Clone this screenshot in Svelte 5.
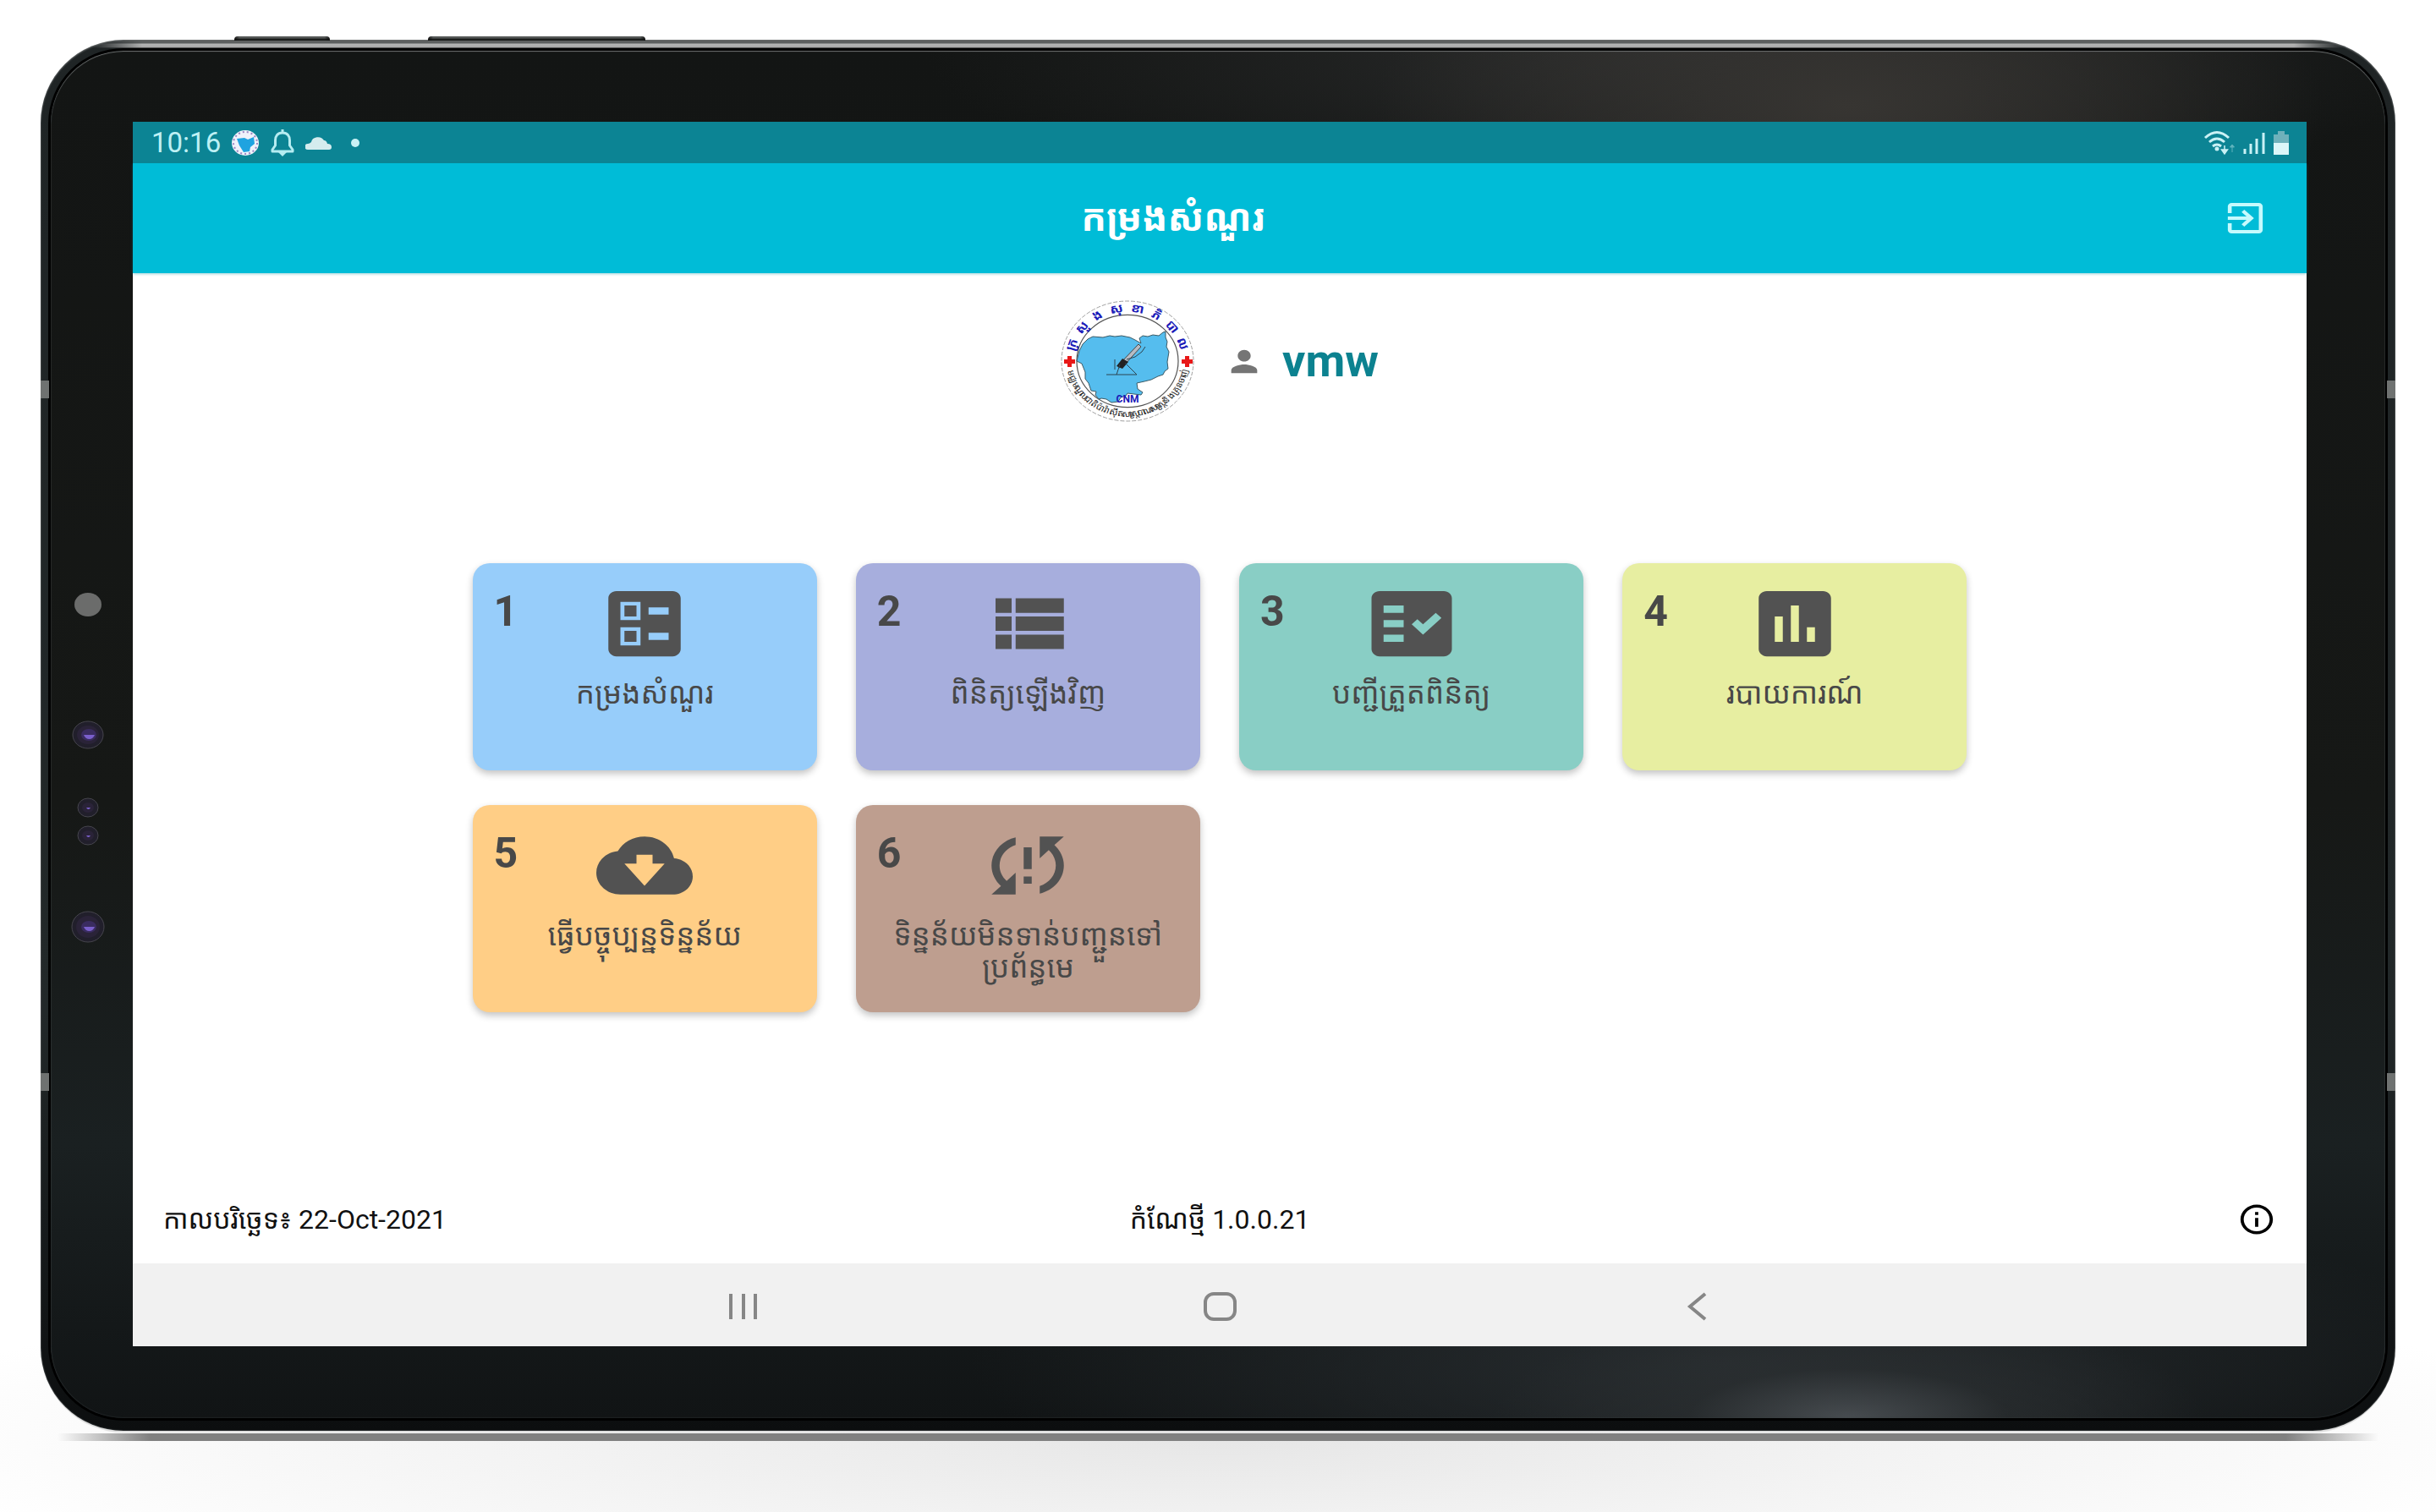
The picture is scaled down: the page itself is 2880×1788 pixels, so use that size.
<script>
  const cards = [
    { n: 1, tone: 'blue', label: 'កម្រងសំណួរ', icon: 'ballot' },
    { n: 2, tone: 'indigo', label: 'ពិនិត្យឡើងវិញ', icon: 'list' },
    { n: 3, tone: 'teal', label: 'បញ្ជីត្រួតពិនិត្យ', icon: 'check' },
    { n: 4, tone: 'lime', label: 'របាយការណ៍', icon: 'chart' },
    { n: 5, tone: 'orange', label: 'ធ្វើបច្ចុប្បន្នទិន្នន័យ', icon: 'cloud' },
    { n: 6, tone: 'brown', label: 'ទិន្នន័យមិនទាន់បញ្ជួនទៅ ប្រព័ន្ធមេ', icon: 'sync' }
  ];

  const icons = {
    ballot: 'M13 9.500h5v-2h-5v2zm0 7h5v-2h-5v2zm6 4.500H5c-1.100 0-2-.9-2-2V5c0-1.100.9-2 2-2h14c1.100 0 2 .9 2 2v14c0 1.100-.9 2-2 2zM6 11h5V6H6v5zm1-4h3v3H7V7zM6 18h5v-5H6v5zm1-4h3v3H7v-3z',
    list: 'M4 14h4v-4H4v4zm0 5h4v-4H4v4zm0-10h4V5H4v4zm5 5h12v-4H9v4zm0 5h12v-4H9v4zM9 5v4h12V5H9z',
    check: 'M20 3H4c-1.100 0-2 .9-2 2v14c0 1.100.9 2 2 2h16c1.100 0 2-.9 2-2V5c0-1.100-.9-2-2-2zM10 17H5v-2h5v2zm0-4H5v-2h5v2zm0-4H5V7h5v2zm4.820 6L12 12.160l1.410-1.410 1.410 1.420L17.990 9l1.420 1.420L14.820 15z',
    chart: 'M19 3H5c-1.100 0-2 .9-2 2v14c0 1.100.9 2 2 2h14c1.100 0 2-.9 2-2V5c0-1.100-.9-2-2-2zM9 17H7v-7h2v7zm4 0h-2V7h2v10zm4 0h-2v-4h2v4z',
    cloud: 'M19.350 10.040C18.670 6.590 15.640 4 12 4 9.110 4 6.600 5.640 5.350 8.040 2.340 8.360 0 10.910 0 14c0 3.310 2.690 6 6 6h13c2.760 0 5-2.240 5-5 0-2.640-2.050-4.780-4.650-4.960zM12 17.600l-5-6.100h3V9h4v2.500h3z',
    sync: 'M3 12c0 2.210.91 4.200 2.360 5.640L3 20h6v-6l-2.240 2.240C5.680 15.150 5 13.660 5 12c0-2.610 1.670-4.830 4-5.650V4.260C5.550 5.150 3 8.270 3 12zm8 5h2v-2h-2v2zM21 4h-6v6l2.240-2.240C18.320 8.850 19 10.340 19 12c0 2.610-1.670 4.830-4 5.650v2.090c3.450-.89 6-4.010 6-7.740 0-2.210-.91-4.200-2.360-5.640L21 4zm-10 9h2V7h-2v6z'
  };

  const upperRing = [
    ['ក្រ', -72], ['សួ', -51], ['ង', -31], ['សុ', -11],
    ['ខា', 10], ['ភិ', 30], ['បា', 50], ['ល', 71]
  ];
  const lowerRing = ['ម', 'ជ្ឈ', 'ម', 'ណ្ឌ', 'ល', 'ជា', 'តិ', 'ប៉ា', 'រ៉ា', 'ស៊ី', 'ត', 'សា', 'ស្ត្រ', 'បា', 'ណ', 'សា', 'ស្ត្រ', 'និ', 'ង', 'គ្រុ', 'ន', 'ចា', 'ញ់'];
  const lowerAngle = (i) => 77 - i * 7;
</script>

<div class="stage">
  <div class="device">
    <span class="key power"></span>
    <span class="key volume"></span>
    <span class="band upper left"></span>
    <span class="band lower left"></span>
    <span class="band upper right"></span>
    <span class="band lower right"></span>
    <div class="glass">
      <svg class="sensors" viewBox="0 0 48 430" aria-hidden="true">
        <ellipse cx="24" cy="20" rx="16" ry="14" fill="#6b6c6b" />
        {#each [[174, 18, 16, 1], [260, 12, 11, 0], [293, 12, 11, 0], [401, 19, 18, 1]] as [cy, rx, ry, big]}
          <ellipse cx="24" {cy} {rx} {ry} fill="#211f2b" stroke="#46454d" stroke-width="1" />
          <ellipse cx="24" {cy} rx={rx - 5} ry={ry - 5} fill="#2a2338" />
          {#if big}
            <ellipse cx="25" {cy} rx="9" ry="7" fill="#3a2c60" />
            <path d="M19 {cy}h13q-2 5-6.500 5t-6.500-5z" fill="#7a5fcb" />
          {:else}
            <path d="M22 {cy}h5q-1 2-2.500 2t-2.500-2z" fill="#7a5fcb" />
          {/if}
        {/each}
      </svg>

      <div class="screen">
        <div class="status">
          <div class="group">
            <span class="time">10:16</span>
            <svg width="34" height="32" viewBox="0 0 34 32" aria-hidden="true">
              <ellipse cx="17" cy="16" rx="16" ry="15" fill="#eef2fa" />
              <ellipse cx="17" cy="16" rx="14" ry="13" fill="none" stroke="#9d86c4" stroke-width="2" stroke-dasharray="2 3" />
              <path d="M7 11l9-1 4 2 7-3 1 8-5 4-1 5-7 1-5-8z" fill="#1fa3e0" />
            </svg>
            <svg width="30" height="32" viewBox="0 0 30 32" fill="none" stroke="#b5ecf1" stroke-width="3" aria-hidden="true">
              <path d="M15 0v4M15 4c-6 0-8.500 4-8.500 9v6L3 24v2h24v-2l-3.500-5v-6c0-5-2.500-9-8.500-9z" stroke-linejoin="round" />
              <path d="M10 27h10l-5 5z" fill="#b5ecf1" stroke="none" />
            </svg>
            <svg width="32" height="18" viewBox="0 0 32 18" aria-hidden="true">
              <path d="M3 17a3 3 0 0 1 0-7q2 0 4-2a8 7 0 0 1 15-2q3 0 4 4 5 0 5 4 0 3-3 3z" fill="#d5ecee" />
            </svg>
            <span class="dot"></span>
          </div>
          <div class="group tight">
            <svg width="38" height="30" viewBox="0 0 38 30" fill="none" stroke="#c9f1f5" stroke-width="3" aria-hidden="true">
              <path d="M2 9q14-13 28 0M7 14q9-8 18 0M11 19q5-4 10 0" />
              <circle cx="16" cy="22" r="2.500" fill="#c9f1f5" stroke="none" />
              <path d="M25 18v6M21.500 23h7l-3.500 5z" fill="#c9f1f5" stroke-width="1.500" />
              <path d="M34 26v-7M31.500 20h5L34 17z" stroke="#5fb3bd" fill="#5fb3bd" stroke-width="1" />
            </svg>
            <svg width="26" height="26" viewBox="0 0 26 26" fill="none" stroke="#c9f1f5" stroke-width="3" aria-hidden="true">
              <path d="M2 26v-6M9 26V14M16 26V8M24 26V1" />
            </svg>
            <svg width="20" height="28" viewBox="0 0 20 28" aria-hidden="true">
              <path d="M6 0h8v4h5v11H1V4h5z" fill="#6eb1bb" />
              <path d="M1 14h18v14H1z" fill="#dcf6f8" />
            </svg>
          </div>
        </div>

        <header>
          <h1>កម្រងសំណួរ</h1>
          <button class="plain" aria-label="Log out">
            <svg width="55" height="48" viewBox="0 0 24 24" preserveAspectRatio="none" fill="#c6fafd" aria-hidden="true">
              <path d="M10.090 15.590L11.500 17l5-5-5-5-1.410 1.410L12.670 11H3v2h9.670l-2.580 2.590zM19 3H5c-1.110 0-2 .9-2 2v4h2V5h14v14H5v-4H3v4c0 1.100.89 2 2 2h14c1.100 0 2-.9 2-2V5c0-1.100-.9-2-2-2z" />
            </svg>
          </button>
        </header>

        <main>
          <div class="profile">
            <svg class="logo" viewBox="0 0 158 144" role="img" aria-label="CNM">
              <g transform="translate(79 72) scale(1 .91)">
                <circle r="78" fill="#fff" stroke="#999" stroke-dasharray="5 2" />
                <circle r="60" fill="#fff" stroke="#555" stroke-width="1.200" />
                {#each upperRing as [glyph, angle]}
                  <text class="ring" transform="rotate({angle}) translate(0 -64)" text-anchor="middle">{glyph}</text>
                {/each}
                {#each lowerRing as glyph, i}
                  <text class="lower-ring" transform="rotate({lowerAngle(i)}) translate(0 72)" text-anchor="middle">{glyph}</text>
                {/each}
              </g>
              <path d="M22 60l4-8 6-6 6-3 12 1 8-2 6 1 8-1 10 2 6 3 7 4-2-6 4-3 6 1 6-2 7 1 5-4 3-1 0 7 2 5-1 6 3 6-2 12 1 8-4 3-2 4-6 2-8 4-8 2-9 2 1 7 6 4-2 3-8-1-8-1-2 3-6 2-3 5-8 1-6-4-6-1-3 1-4-5 1-4-6-1-3-9-4-5 0-8-4-10-6-3z" fill="#55bdee" stroke="#3b5a66" stroke-width="1" />
              <path d="M92 52l3 3-20 22-6 3 1-5z" fill="#b8bcc4" stroke="#444" />
              <path d="M66 78l7-9 7 4-7 8z" fill="#222" />
              <path d="M54 88h36M70 76l-4 12M76 74l14 14M64 70v12M78 70l10-3 8-6 4-6" fill="none" stroke="#2d4450" />
              <path d="M4 70h4v-4h5v4h4v5h-4v4h-5v-4h-4zM143 70h4v-4h5v4h4v5h-4v4h-5v-4h-4z" fill="#e81818" />
              <text x="79" y="121" class="cnm" text-anchor="middle">CNM</text>
            </svg>
            <div class="user">
              <svg width="46" height="41" viewBox="0 0 24 24" preserveAspectRatio="none" fill="#757575" aria-hidden="true">
                <path d="M12 12c2.210 0 4-1.790 4-4s-1.790-4-4-4-4 1.790-4 4 1.790 4 4 4zm0 2c-2.670 0-8 1.340-8 4v2h16v-2c0-2.660-5.330-4-8-4z" />
              </svg>
              <strong>vmw</strong>
            </div>
          </div>

          <nav class="grid" aria-label="Menu">
            {#each cards as card}
              <button class="card {card.tone}">
                <span class="number">{card.n}</span>
                <svg width="114" height="103" viewBox="0 0 24 24" preserveAspectRatio="none" fill="#525252" fill-rule="evenodd" aria-hidden="true">
                  <path d={icons[card.icon]} />
                </svg>
                <span class="label">{card.label}</span>
              </button>
            {/each}
          </nav>

          <footer>
            <span>កាលបរិច្ឆេទ៖ 22-Oct-2021</span>
            <span>កំណែថ្មី 1.0.0.21</span>
            <button class="plain info" aria-label="Information">
              <svg width="46" height="42" viewBox="0 0 24 24" preserveAspectRatio="none" aria-hidden="true">
                <path d="M11 7h2v2h-2zm0 4h2v6h-2zm1-9C6.480 2 2 6.480 2 12s4.480 10 10 10 10-4.480 10-10S17.520 2 12 2zm0 18c-4.410 0-8-3.590-8-8s3.590-8 8-8 8 3.590 8 8-3.590 8-8 8z" />
              </svg>
            </button>
          </footer>
        </main>

        <div class="system">
          <button class="plain" aria-label="Recent apps">
            <svg width="40" height="36" viewBox="0 0 40 36" aria-hidden="true"><path d="M6 3v30M21 3v30M35 3v30" /></svg>
          </button>
          <button class="plain" aria-label="Home">
            <svg width="40" height="36" viewBox="0 0 40 36" aria-hidden="true"><rect x="3" y="3" width="35" height="30" rx="10" /></svg>
          </button>
          <button class="plain" aria-label="Back">
            <svg width="40" height="36" viewBox="0 0 40 36" aria-hidden="true"><path d="M30 3L12 18l18 15" /></svg>
          </button>
        </div>
      </div>
    </div>
  </div>
</div>

<style>
  :global(body) {
    margin: 0;
    background: #fff;
  }
  * {
    box-sizing: border-box;
  }
  .stage {
    position: relative;
    z-index: 0;
    min-height: 100vh;
    padding: 47px 48px 96px;
    display: flex;
    font-family: Roboto, 'Noto Sans Khmer', 'Khmer OS', 'DejaVu Sans', sans-serif;
    background: radial-gradient(ellipse 56% 220px at 50% calc(100% - 90px), #e6e6e6, #f3f3f3 50%, #fff);
  }
  .device {
    position: relative;
    flex: 1;
    display: flex;
    padding: 13px 12px 15px;
    border-radius: 98px;
    background:
      linear-gradient(90deg, #1f2425, transparent 60px, transparent calc(100% - 60px), #1f2425) center top / calc(100% - 120px) 10px no-repeat,
      linear-gradient(#5b5e5e 4px, #b4b4b4 5px, #a8a8a8 9px, #000 10px) center top / calc(100% - 120px) 10px no-repeat,
      linear-gradient(#1f2425, #222829 70%, #0c0e0f);
    box-shadow: inset 0 1px 2px #6a6d6d, inset 0 0 2px #4c5557, 0 3px 0 -1px #e0e0e0;
  }
  .device::before {
    content: '';
    position: absolute;
    z-index: -1;
    left: 20px;
    right: 20px;
    bottom: -12px;
    height: 9px;
    background: linear-gradient(90deg, transparent, #808080 4%, #808080 96%, transparent);
  }
  .key {
    position: absolute;
    top: -4px;
    height: 5px;
    border-radius: 4px 4px 0 0;
    background: linear-gradient(90deg, #111, transparent 6px, transparent calc(100% - 6px), #111), linear-gradient(#4a4d4c, #5c5f5e 2px, #1a1c1b 3px);
  }
  .power {
    left: 229px;
    width: 113px;
  }
  .volume {
    left: 458px;
    width: 257px;
  }
  .band {
    position: absolute;
    width: 10px;
    height: 21px;
    background: #6f7271;
  }
  .upper {
    top: 403px;
  }
  .lower {
    bottom: 402px;
  }
  .left {
    left: 0;
  }
  .right {
    right: 0;
  }
  .glass {
    flex: 1;
    display: flex;
    padding: 84px 93px 85px 97px;
    border-radius: 86px;
    background:
      radial-gradient(ellipse 420px 130px at 77% 100%, #474c50, #2b2f31a0 45%, transparent),
      radial-gradient(ellipse 900px 200px at 72% 96%, #272c2f, transparent),
      radial-gradient(ellipse 560px 240px at 77% 4%, #373532, transparent),
      radial-gradient(ellipse 900px 200px at 70% 0, #2a2b2b, transparent),
      linear-gradient(#131514, #161816 55%, #1a2021 80%, #111415);
    box-shadow: 0 0 0 3px #000, inset 0 1px 1px #6e7070, inset 0 0 2px #3a4043;
  }
  .sensors {
    position: absolute;
    left: 32px;
    top: 648px;
    width: 48px;
    height: 430px;
  }
  .screen {
    flex: 1;
    display: flex;
    flex-direction: column;
    background: #fff;
  }
  .status {
    height: 49px;
    padding: 0 20px 0 22px;
    display: flex;
    justify-content: space-between;
    align-items: center;
    background: #0c8494;
  }
  .group {
    display: flex;
    align-items: center;
    gap: 12px;
  }
  .tight {
    gap: 9px;
  }
  .time {
    font-size: 33px;
    color: #bdf0f4;
  }
  .dot {
    width: 10px;
    height: 10px;
    margin-left: 10px;
    border-radius: 50%;
    background: #c9f1f5;
  }
  header {
    height: 130px;
    padding-right: 45px;
    display: flex;
    align-items: center;
    gap: 10px;
    background: #00bcd7;
    box-shadow: 0 1px 3px #0a8c9c66;
  }
  h1 {
    flex: 1;
    margin: 0;
    text-align: center;
    font-size: 44px;
    line-height: 60px;
    font-weight: 700;
    color: #fff;
  }
  button {
    font: inherit;
    border: 0;
    cursor: pointer;
  }
  .plain {
    display: flex;
    padding: 0;
    background: none;
  }
  main {
    flex: 1;
    display: flex;
    flex-direction: column;
  }
  .profile {
    display: flex;
    justify-content: center;
    align-items: center;
    gap: 36px;
    padding-top: 32px;
  }
  .user {
    display: flex;
    align-items: center;
    gap: 22px;
  }
  .logo {
    width: 158px;
    height: 144px;
  }
  .ring {
    font-size: 16px;
    font-weight: 700;
    fill: #1a1ab8;
  }
  .lower-ring {
    font-size: 11px;
    fill: #222;
  }
  .cnm {
    font-size: 12px;
    font-weight: 700;
    fill: #1a1ab8;
  }
  strong {
    font-size: 54px;
    line-height: 60px;
    color: #0c8290;
  }
  .grid {
    width: 68.75%;
    margin: 167px auto 0;
    display: grid;
    grid-template-columns: repeat(4, 1fr);
    gap: 41px 46px;
  }
  .card {
    position: relative;
    min-height: 245px;
    padding: 20px 32px 12px;
    display: flex;
    flex-direction: column;
    align-items: center;
    border-radius: 20px;
    box-shadow: 0 4px 8px #0000003d;
    color: #484848;
  }
  .blue { background: #97cdfa; }
  .indigo { background: #a7aedd; }
  .teal { background: #89cec5; }
  .lime { background: #e7eea1; }
  .orange { background: #ffce86; }
  .brown { background: #be9e8f; }
  .number {
    position: absolute;
    left: 25px;
    top: 29px;
    font-size: 50px;
    line-height: 56px;
    font-weight: 700;
  }
  .label {
    font-size: 35px;
    line-height: 38px;
    margin-top: 13px;
  }
  footer {
    margin-top: auto;
    padding: 0 36px 31px;
    display: grid;
    grid-template-columns: 1fr auto 1fr;
    align-items: center;
    font-size: 32px;
    line-height: 42px;
    color: #111;
  }
  .info {
    justify-self: end;
  }
  .system {
    height: 98px;
    padding: 4px 439px 0;
    display: flex;
    justify-content: space-around;
    align-items: center;
    background: #f1f1f1;
  }
  .system svg {
    fill: none;
    stroke: #868686;
    stroke-width: 4;
  }
</style>
